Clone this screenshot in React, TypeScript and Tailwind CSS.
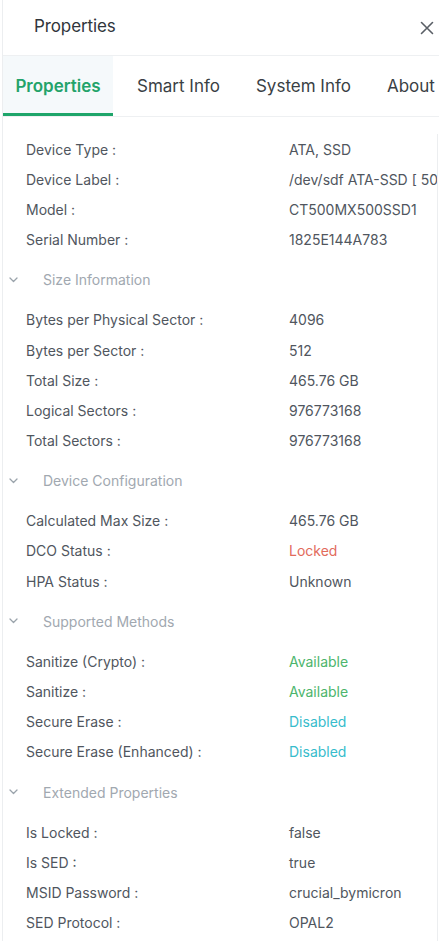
import React from "react";

type Row = { label: string; value: string; color?: string };
type Section = { title?: string; rows: Row[] };

const sections: Section[] = [
  {
    rows: [
      { label: "Device Type :", value: "ATA, SSD" },
      { label: "Device Label :", value: "/dev/sdf ATA-SSD [ 500 GB ]" },
      { label: "Model :", value: "CT500MX500SSD1" },
      { label: "Serial Number :", value: "1825E144A783" },
    ],
  },
  {
    title: "Size Information",
    rows: [
      { label: "Bytes per Physical Sector :", value: "4096" },
      { label: "Bytes per Sector :", value: "512" },
      { label: "Total Size :", value: "465.76 GB" },
      { label: "Logical Sectors :", value: "976773168" },
      { label: "Total Sectors :", value: "976773168" },
    ],
  },
  {
    title: "Device Configuration",
    rows: [
      { label: "Calculated Max Size :", value: "465.76 GB" },
      { label: "DCO Status :", value: "Locked", color: "text-[#e26b5c]" },
      { label: "HPA Status :", value: "Unknown" },
    ],
  },
  {
    title: "Supported Methods",
    rows: [
      { label: "Sanitize (Crypto) :", value: "Available", color: "text-[#4cb56c]" },
      { label: "Sanitize :", value: "Available", color: "text-[#4cb56c]" },
      { label: "Secure Erase :", value: "Disabled", color: "text-[#37bccc]" },
      { label: "Secure Erase (Enhanced) :", value: "Disabled", color: "text-[#37bccc]" },
    ],
  },
  {
    title: "Extended Properties",
    rows: [
      { label: "Is Locked :", value: "false" },
      { label: "Is SED :", value: "true" },
      { label: "MSID Password :", value: "crucial_bymicron" },
      { label: "SED Protocol :", value: "OPAL2" },
    ],
  },
];

function Chevron() {
  return (
    <svg width="9" height="6" viewBox="0 0 9 6" fill="none" className="text-[#9aa3ab]">
      <path d="M1 1l3.5 3.5L8 1" stroke="currentColor" strokeWidth="1.3" strokeLinecap="round" strokeLinejoin="round" />
    </svg>
  );
}

function CloseIcon() {
  return (
    <svg width="16" height="16" viewBox="0 0 16 16" fill="none" className="text-[#5a5f66]">
      <path d="M2.5 2.5l11 11M13.5 2.5l-11 11" stroke="currentColor" strokeWidth="1.6" strokeLinecap="round" />
    </svg>
  );
}

export default function App() {
  return (
    <div
      className="w-[439px] h-[941px] overflow-hidden bg-white"
      style={{ fontFamily: "Inter, 'Noto Sans', sans-serif" }}
    >
      <div className="ml-[2px] h-full border-l border-[#eceef0] flex flex-col">
        {/* Header */}
        <div className="h-[56px] flex items-center justify-between pl-[31px] pr-[4px] border-b border-[#eef0f2] shrink-0">
          <span className="text-[17px] text-[#30353b] tracking-[-0.1px] pb-[1px]">Properties</span>
          <CloseIcon />
        </div>
        {/* Tabs */}
        <div className="h-[61px] flex items-stretch border-b border-[#eef0f2] shrink-0 whitespace-nowrap">
          <div className="w-[110px] bg-[#f5f9fb] border-b-[3px] border-[#1ea56a] flex items-center justify-center">
            <span className="text-[17px] font-semibold text-[#23a36a] pt-[4px]">Properties</span>
          </div>
          <div className="ml-[24px] pt-[1px] flex items-center text-[17px] text-[#3a3f45]">Smart Info</div>
          <div className="ml-[36px] pt-[1px] flex items-center text-[17px] text-[#3a3f45]">System Info</div>
          <div className="ml-[36px] pt-[1px] flex items-center text-[17px] text-[#3a3f45]">About</div>
        </div>
        {/* Content */}
        <div className="pt-[17px] pr-[1px] flex-1">
          <div className="h-full border-r border-[#eceef0] overflow-hidden">
            {sections.map((s, i) => (
              <div key={i}>
                {s.title && (
                  <div className="h-[50.5px] flex items-center">
                    <div className="w-[40px] pl-[6px] flex items-center">
                      <Chevron />
                    </div>
                    <span className="text-[14px] text-[#a1a8b0]">{s.title}</span>
                  </div>
                )}
                {s.rows.map((r) => (
                  <div key={r.label} className="h-[30.1px] flex items-center text-[14px] whitespace-nowrap">
                    <div className="w-[286px] pl-[23px] text-[#50565e] shrink-0">{r.label}</div>
                    <div className={r.color ?? "text-[#50565e]"}>{r.value}</div>
                  </div>
                ))}
              </div>
            ))}
          </div>
        </div>
      </div>
    </div>
  );
}
